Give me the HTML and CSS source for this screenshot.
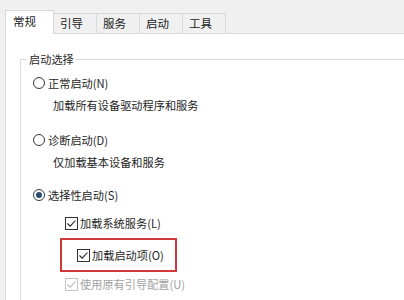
FILE: index.html
```html
<!DOCTYPE html>
<html lang="zh-CN">
<head>
<meta charset="utf-8">
<link rel="stylesheet" href="styles.css">
</head>
<body>
<div class="window">
  <div class="tabs">
    <div class="tab active">常规</div>
    <div class="tab">引导</div>
    <div class="tab">服务</div>
    <div class="tab">启动</div>
    <div class="tab">工具</div>
  </div>
  <div class="panel">
    <div class="group">
      <div class="group-title">启动选择</div>
      <div class="row r1"><span class="radio"></span><span>正常启动(N)</span></div>
      <div class="desc d1">加载所有设备驱动程序和服务</div>
      <div class="row r2"><span class="radio"></span><span>诊断启动(D)</span></div>
      <div class="desc d2">仅加载基本设备和服务</div>
      <div class="row r3"><span class="radio checked"></span><span>选择性启动(S)</span></div>
      <div class="row cb c1"><span class="check"><svg viewBox="0 0 13 13" width="13" height="13"><path d="M2.5 6.5 L5.2 9.2 L10.5 3.5" fill="none" stroke="#222" stroke-width="1.1"/></svg></span><span>加载系统服务(L)</span></div>
      <div class="highlight">
        <div class="row cb"><span class="check"><svg viewBox="0 0 13 13" width="13" height="13"><path d="M2.5 6.5 L5.2 9.2 L10.5 3.5" fill="none" stroke="#222" stroke-width="1.1"/></svg></span><span>加载启动项(O)</span></div>
      </div>
      <div class="row cb c3 disabled"><span class="check"><svg viewBox="0 0 13 13" width="13" height="13"><path d="M2.5 6.5 L5.2 9.2 L10.5 3.5" fill="none" stroke="#b8b8b8" stroke-width="1.1"/></svg></span><span>使用原有引导配置(U)</span></div>
    </div>
  </div>
</div>
</body>
</html>
```
FILE: styles.css
```css
html, body {
  margin: 0;
  padding: 0;
}
body {
  width: 404px;
  height: 300px;
  overflow: hidden;
  background: #f0f0f0;
  font-family: "Noto Sans CJK SC", "Noto Sans", sans-serif;
  font-size: 11.2px;
  color: #1e1e1e;
}
.window {
  display: flex;
  flex-direction: column;
  height: 300px;
  overflow: hidden;
}
.tabs {
  flex: none;
  display: flex;
  align-items: flex-end;
  padding-left: 5px;
  height: 33px;
  box-sizing: border-box;
  position: relative;
  z-index: 1;
}
.tab {
  height: 20px;
  line-height: 19px;
  padding: 0 13px 0 6px;
  border: 1px solid #d9d9d9;
  border-bottom: none;
  border-left: none;
  box-sizing: border-box;
  font-size: 11.5px;
  background: #f0f0f0;
  color: #222;
}
.tab.active {
  height: 24px;
  margin-bottom: -1px;
  line-height: 20px;
  padding: 0 17px 0 7px;
  background: #fff;
  border-left: 1px solid #d9d9d9;
}
.panel {
  flex: 1;
  min-height: 0;
  overflow: hidden;
  background: #fff;
  border-top: 1px solid #dadada;
  border-left: 1px solid #dadada;
  margin-left: 5px;
}
.group {
  position: relative;
  margin: 25px 0 0 14px;
  border: 1px solid #dcdcdc;
  border-right: none;
  border-bottom: none;
  padding: 15px 0 20px 12px;
  display: flex;
  flex-direction: column;
}
.group-title {
  position: absolute;
  top: -8px;
  left: 6px;
  padding: 0 2px;
  background: #fff;
  line-height: 15px;
  color: #2a2a2a;
}
.row {
  display: flex;
  align-items: center;
  height: 16px;
  line-height: 16px;
  white-space: nowrap;
}
.desc {
  height: 16px;
  line-height: 16px;
  padding-left: 20px;
  margin-top: 6px;
}
.r2 { margin-top: 19px; }
.r3 { margin-top: 17px; }
.radio {
  width: 12px;
  height: 12px;
  box-sizing: border-box;
  border: 1px solid #333;
  border-radius: 50%;
  margin-right: 3px;
  position: relative;
  flex: none;
}
.radio.checked {
  border-color: #2f3b4a;
}
.radio.checked::after {
  content: "";
  position: absolute;
  left: 2px;
  top: 2px;
  width: 6px;
  height: 6px;
  border-radius: 50%;
  background: #2c4a6e;
}
.cb {
  padding-left: 32px;
}
.check {
  width: 13px;
  height: 13px;
  box-sizing: border-box;
  border: 1px solid #333;
  margin-right: 2px;
  flex: none;
  display: flex;
}
.check svg {
  margin: -1px;
}
.c1 { margin-top: 12px; }
.highlight {
  margin: 7px 0 0 27px;
  width: 117px;
  height: 34px;
  box-sizing: border-box;
  border: 2px solid #d0393c;
  padding: 7px 0 0 15px;
}
.highlight .cb {
  padding-left: 0;
}
.c3 { margin-top: 4px; }
.disabled {
  color: #a2a2a2;
}
.disabled .check {
  border-color: #c4c4c4;
}
```
